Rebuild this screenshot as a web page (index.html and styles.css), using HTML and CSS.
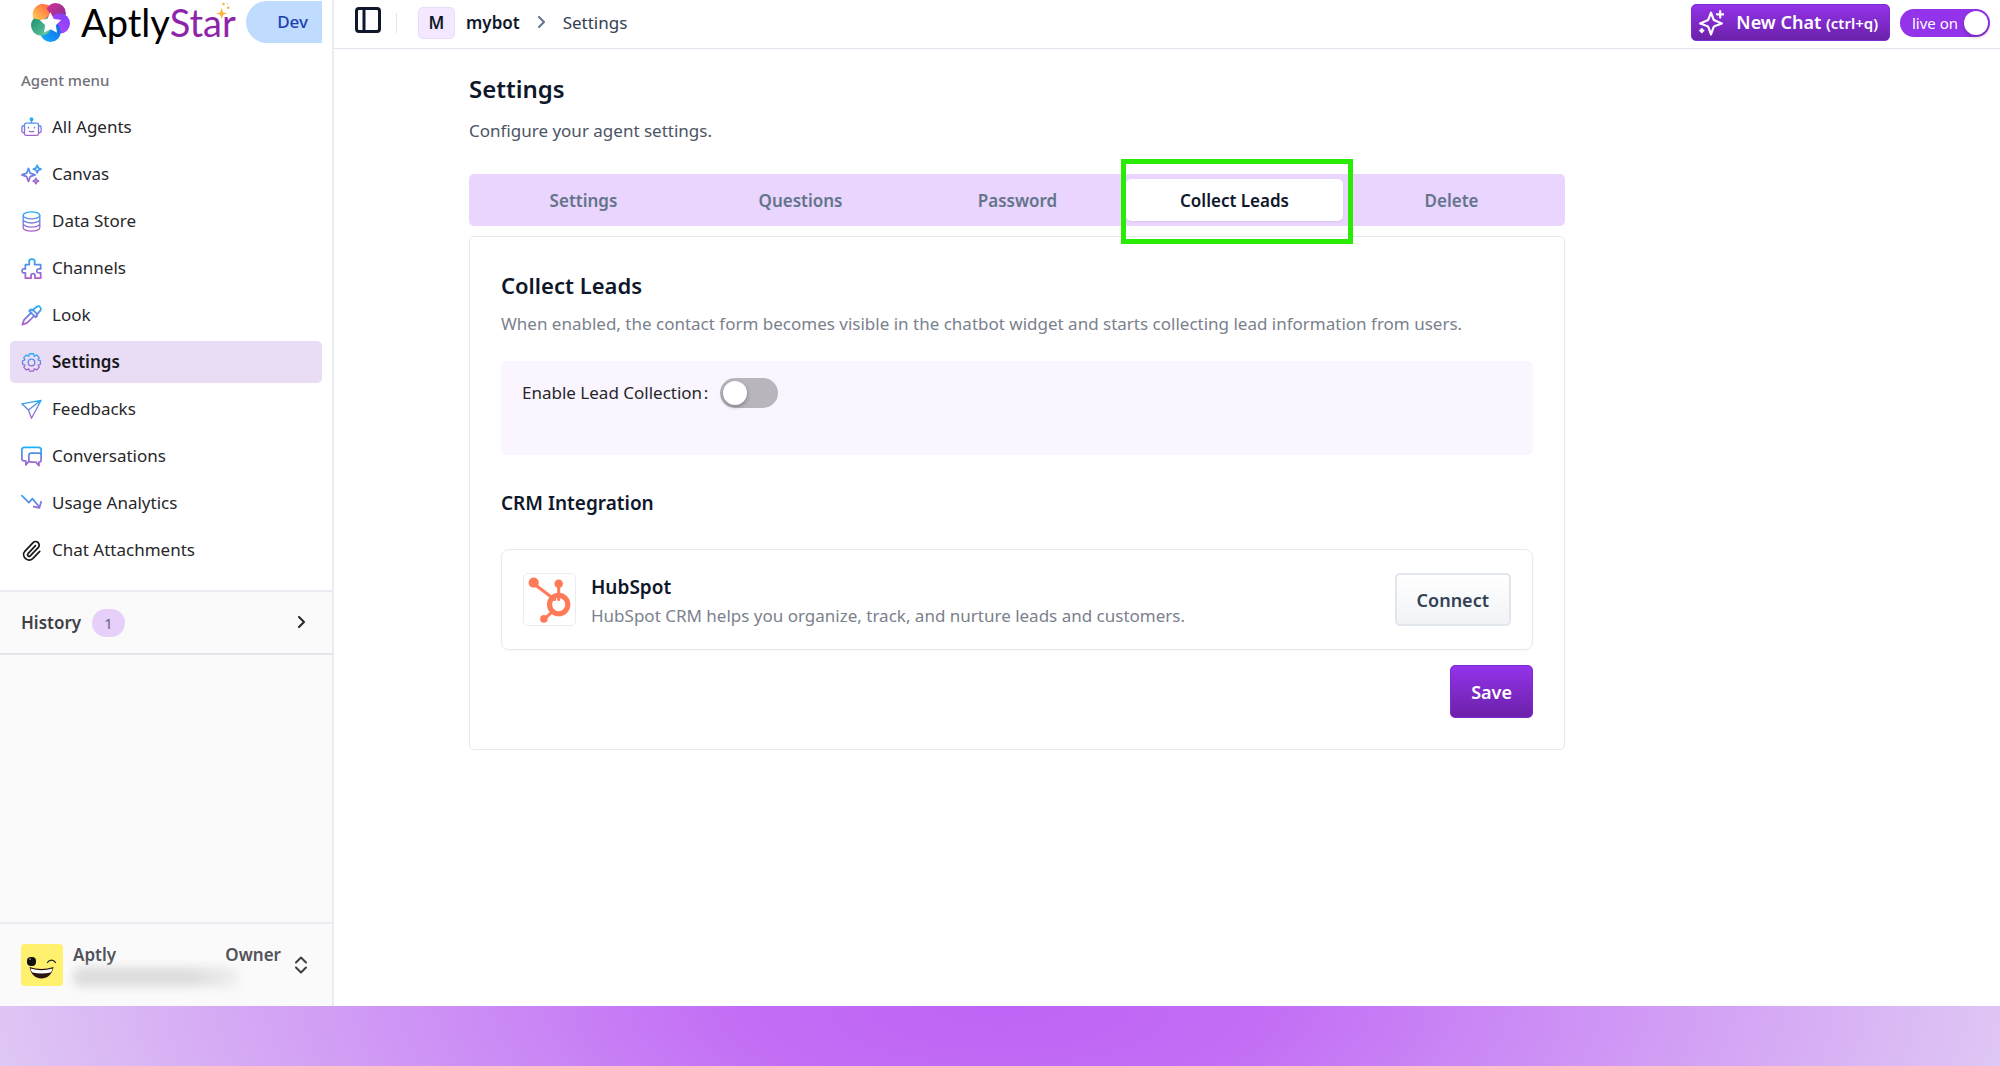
FILE: index.html
```html
<!DOCTYPE html>
<html lang="en">
<head>
<meta charset="utf-8">
<meta name="viewport" content="width=device-width, initial-scale=1">
<title>AptlyStar – Settings</title>
<link rel="stylesheet" href="styles.css">
</head>
<body>
<svg class="defs" aria-hidden="true">
  <defs>
    <linearGradient id="cool" gradientUnits="userSpaceOnUse" x1="0" y1="1" x2="0" y2="23">
      <stop offset="0" stop-color="#1fb0fa"/><stop offset=".5" stop-color="#6f7fe0"/><stop offset="1" stop-color="#b55cc8"/>
    </linearGradient>
    <linearGradient id="p1" x1="0" y1="1" x2="1" y2="0"><stop offset="0" stop-color="#ffd35a"/><stop offset="1" stop-color="#ff5a3c"/></linearGradient>
    <linearGradient id="p2" x1="0" y1="0" x2="1" y2="1"><stop offset="0" stop-color="#d8368c"/><stop offset="1" stop-color="#7a2a9c"/></linearGradient>
    <linearGradient id="p3" x1="1" y1="0" x2="0" y2="1"><stop offset="0" stop-color="#7a3cff"/><stop offset="1" stop-color="#c04cf0"/></linearGradient>
    <linearGradient id="p4" x1="0" y1="1" x2="1" y2="0"><stop offset="0" stop-color="#12b0ff"/><stop offset="1" stop-color="#1560e0"/></linearGradient>
    <linearGradient id="p5" x1="0" y1="0" x2="1" y2="1"><stop offset="0" stop-color="#148a6c"/><stop offset="1" stop-color="#6fd0a8"/></linearGradient>
  </defs>
</svg>
<div class="app">
  <aside class="sidebar">
    <div class="brand">
      <a class="logo" href="#">
        <svg class="logo-mark" viewBox="0 0 40 40" aria-hidden="true">
          <circle cx="13" cy="12" r="10" fill="url(#p1)"/>
          <circle cx="25" cy="11" r="10" fill="url(#p2)"/>
          <circle cx="29" cy="21" r="10" fill="url(#p3)"/>
          <circle cx="20" cy="29" r="10" fill="url(#p4)"/>
          <circle cx="11" cy="23" r="10" fill="url(#p5)"/>
          <path d="M3.500 16A10 10 0 0 1 13 2l7 10-7 6z" fill="url(#p1)"/>
          <path d="M20 10l3.200 6.600 7.200 1-5.200 5.100 1.200 7.200-6.400-3.400-6.400 3.400 1.200-7.200-5.200-5.100 7.200-1z" fill="#fff"/>
        </svg>
        <span class="logo-text">Aptly<span class="logo-accent">Star</span></span>
        <svg class="logo-spark" viewBox="0 0 18 18" aria-hidden="true"><path d="M7 6l1.500 5L13 12l-4.500 1.500L7 18l-1.500-4.500L1 12l4.500-1z"/><circle cx="9" cy="2" r="1.300"/><circle cx="14" cy="6" r="1.300"/><circle cx="13" cy="2" r=".6"/></svg>
      </a>
      <span class="env">Dev</span>
    </div>
    <nav class="nav" aria-label="Agent menu">
      <p class="nav-title">Agent menu</p>
      <ul class="nav-list">
        <li><a class="nav-item" href="#"><svg class="icon" viewBox="0 0 24 24"><circle cx="12" cy="2.500" r="1.500" fill="url(#cool)"/><path d="M12 4v3M6 7h12a2 2 0 0 1 2 2v10a2 2 0 0 1-2 2H6a2 2 0 0 1-2-2V9a2 2 0 0 1 2-2zM4 10H3a2 2 0 0 0-2 2v4a2 2 0 0 0 2 2h1M20 10h1a2 2 0 0 1 2 2v4a2 2 0 0 1-2 2h-1M8.500 11.500v1M15.500 11.500v1M9.500 16.500q2.500 1 5 0"/></svg>All Agents</a></li>
        <li><a class="nav-item" href="#"><svg class="icon icon-bold" viewBox="0 0 24 24"><path d="M8.500 5l2 5.500L16 12.500l-5.500 2L8.500 20l-2-5.500L1 12.500l5.500-2zM18.500 1.500l1.300 3 3 1.300-3 1.300-1.300 3-1.300-3-3-1.300 3-1.300zM17 16.500l1 2 2 1-2 1-1 2-1-2-2-1 2-1z"/></svg>Canvas</a></li>
        <li><a class="nav-item" href="#"><svg class="icon" viewBox="0 0 24 24"><ellipse cx="12" cy="5" rx="9.500" ry="4"/><path d="M2.500 5v14c0 2.200 4.200 4 9.500 4s9.500-1.800 9.500-4V5M2.500 9.700c0 2.200 4.200 4 9.500 4s9.500-1.800 9.500-4M2.500 14.400c0 2.200 4.200 4 9.500 4s9.500-1.800 9.500-4"/></svg>Data Store</a></li>
        <li><a class="nav-item" href="#"><svg class="icon icon-bold" viewBox="0 0 24 24"><path d="M5 7.500h4.500V5.500C8.500 3 10 1.200 12.500 1.200S16.500 3 15.500 5.500v2H22.500v5h-1.500c-4-.5-4 5 0 4.500h1.500v6h-6.500V20.500c.5-3.500-5-3.500-4.500 0V23H5v-6H3.500C.5 18 .5 11.500 3.500 12.500H5z"/></svg>Channels</a></li>
        <li><a class="nav-item" href="#"><svg class="icon icon-bold" viewBox="0 0 24 24"><path d="M13 6l5-4c3-2 6 2 4 4.500L18 11l.5 1.500-2 1.500-7-7L11 5zM12 8.500L3.500 17 1.500 22.500 7 20.500l8.500-8.500M14.500 6.500l3.500 3.500"/></svg>Look</a></li>
        <li><a class="nav-item active" href="#" aria-current="page"><svg class="icon" viewBox="0 0 24 24"><circle cx="12" cy="12" r="3.800"/><path d="M9.700 2h4.600l.9 2.900 2.700-1.400 2.900 2.900-1.300 2.700 2.700.9v4l-2.700.9 1.300 2.700-2.900 2.900-2.700-1.300-.9 2.700h-4.600l-.9-2.700-2.700 1.300-2.900-2.900 1.300-2.700-2.700-.9v-4l2.700-.9-1.300-2.700 2.900-2.900 2.700 1.400z"/></svg>Settings</a></li>
        <li><a class="nav-item" href="#"><svg class="icon" viewBox="0 0 24 24"><path d="M1 5.500L23 1.500 12 22 8.500 12.500zM8.500 12.500L23 1.500"/></svg>Feedbacks</a></li>
        <li><a class="nav-item" href="#"><svg class="icon icon-bold" viewBox="0 0 24 24"><path d="M9 17.500l-3.500 4V17H3.500C2 17 1 16 1 14.500v-10C1 2.500 2.500 1.500 4 1.500h16c2 0 3 1 3 3v6M11.500 8h9c1.500 0 2.500 1 2.500 2.500V16c0 1.500-1 2.500-2.500 2.500V22.500L17 18.500h-5.500C10 18.500 9 17.500 9 16v-5.500C9 9 10 8 11.500 8z"/></svg>Conversations</a></li>
        <li><a class="nav-item" href="#"><svg class="icon icon-bold" viewBox="0 0 24 24"><path d="M1 3l8 8 4-4.500 8 9.500M23 10l-2 7-6.500-1.500"/></svg>Usage Analytics</a></li>
        <li><a class="nav-item" href="#"><svg class="icon icon-dark" viewBox="0 0 24 24"><path d="M16.500 6.500L8 15.500a1.800 1.800 0 0 0 2.600 2.600l9-9.300a4 4 0 0 0-5.800-5.700l-9.200 9.500a6.200 6.200 0 0 0 8.800 8.700l8-8.300"/></svg>Chat Attachments</a></li>
      </ul>
    </nav>
    <button class="history" type="button">
      <span>History</span><span class="count">1</span>
      <svg class="chev" viewBox="0 0 14 14"><path d="M5 1l5 5-5 5"/></svg>
    </button>
    <div class="spacer"></div>
    <button class="account" type="button">
      <svg class="avatar" viewBox="0 0 42 42" aria-hidden="true">
        <rect width="42" height="42" rx="4" fill="#fff06e"/>
        <rect x="6" y="13" width="9" height="9" rx="4" fill="#111"/><circle cx="9" cy="15" r="1" fill="#777"/>
        <path d="M26.500 18.500c2-3.300 6-3.300 8 0" fill="none" stroke="#222" stroke-width="1.300"/>
        <path d="M8.500 23q12 4 24 0C31 31 26 34.500 20.500 34.500S10 31 8.500 23z" fill="#2b1510"/>
        <path d="M9.500 24.500q11 3.500 22 0-.5 3.500-2 4-9 2-18 0-1.500-1-2-4z" fill="#fff"/>
      </svg>
      <span class="who"><span class="who-row"><span>Aptly</span><span>Owner</span></span><span class="smudge"></span></span>
      <svg class="updown" viewBox="0 0 12 18"><path d="M1 6.500l5-5 5 5M1 11.500l5 5 5-5"/></svg>
    </button>
  </aside>
  <div class="content">
    <header class="topbar">
      <button class="panel-btn" type="button" aria-label="Toggle sidebar"><svg viewBox="0 0 26 26"><rect x="1.500" y="1.500" width="23" height="23" rx="2.500"/><path d="M9 1.500v23"/></svg></button>
      <span class="divider"></span>
      <nav class="crumbs" aria-label="Breadcrumb">
        <span class="bot-badge">M</span>
        <a class="bot-name" href="#">mybot</a>
        <svg class="chev chev-light" viewBox="0 0 14 14"><path d="M5 1l5 5-5 5"/></svg>
        <a class="crumb" href="#">Settings</a>
      </nav>
      <button class="primary new-chat" type="button">
        <svg viewBox="0 0 24 24"><path d="M12 2.500l2.200 5.800c.3.800.7 1.200 1.500 1.500l6.300 2.700-6.300 2.200c-.8.300-1.200.7-1.500 1.500L12 22.500l-2.200-6.300c-.3-.8-.7-1.200-1.500-1.500L2 12.500l6.300-2.700c.8-.3 1.200-.7 1.500-1.500zM20.500 1v6M17.500 4h6M3.500 17.500v3M2 19h3"/></svg>
        <span>New Chat <small>(ctrl+q)</small></span>
      </button>
      <label class="live"><input type="checkbox" role="switch" checked><span>live on</span></label>
    </header>
    <main class="main">
      <div class="page">
        <h1>Settings</h1>
        <p class="lead">Configure your agent settings.</p>
        <div class="tabs" role="tablist">
          <button class="tab" type="button" role="tab">Settings</button>
          <button class="tab" type="button" role="tab">Questions</button>
          <button class="tab" type="button" role="tab">Password</button>
          <button class="tab selected" type="button" role="tab" aria-selected="true">Collect Leads</button>
          <button class="tab" type="button" role="tab">Delete</button>
        </div>
        <section class="card">
          <h2>Collect Leads</h2>
          <p class="muted">When enabled, the contact form becomes visible in the chatbot widget and starts collecting lead information from users.</p>
          <div class="enable">
            <label for="lead">Enable Lead Collection&hairsp;:</label>
            <input id="lead" class="switch" type="checkbox" role="switch">
          </div>
          <h3>CRM Integration</h3>
          <div class="integration">
            <span class="hub"><svg viewBox="0 0 50 50" aria-hidden="true"><path d="M9 9l21 16M34 11v14M29 36l-9 8" stroke-width="3"/><circle cx="34" cy="30" r="9" stroke-width="5"/><g class="dots"><circle cx="9.500" cy="8.500" r="5"/><circle cx="34" cy="9.500" r="4.200"/><circle cx="19.500" cy="44" r="3.700"/></g></svg></span>
            <div class="about"><h4>HubSpot</h4><p class="muted">HubSpot CRM helps you organize, track, and nurture leads and customers.</p></div>
            <button class="secondary" type="button">Connect</button>
          </div>
          <button class="primary save" type="submit">Save</button>
        </section>
      </div>
    </main>
  </div>
</div>
<footer class="band"></footer>
</body>
</html>
```

FILE: styles.css
```css
* { box-sizing: border-box; }
body {
  margin: 0;
  min-height: 100vh;
  display: flex;
  flex-direction: column;
  background: #fff;
  color: #27272a;
  font: 17px/24px "Noto Sans", "Open Sans", sans-serif;
}
h1, h2, h3, h4, p, ul { margin: 0; padding: 0; }
h1, h2, h3, h4 { color: #0f172a; font-weight: 600; }
ul { list-style: none; }
a { color: inherit; text-decoration: none; }
button { margin: 0; padding: 0; border: 0; background: none; color: inherit; font: inherit; cursor: pointer; }
svg { display: block; flex: none; fill: none; stroke-linecap: round; stroke-linejoin: round; }
.defs { position: absolute; width: 0; height: 0; }

.app { flex: 1; display: flex; }
.band {
  height: 60px;
  background: radial-gradient(52% 600% at 50% 0, #bf64f6, #c26df5 25%, #d09af5 62%, #e0caf4);
}

/* Sidebar */
.sidebar {
  width: 334px;
  flex: none;
  display: flex;
  flex-direction: column;
  border-right: 2px solid #ebebf3;
  background: #fafafa;
}
.brand { display: flex; align-items: center; justify-content: space-between; height: 48px; padding: 0 10px 4px 30px; background: #fff; }
.logo { position: relative; display: flex; align-items: center; gap: 10px; }
.logo-mark { width: 41px; height: 41px; }
.logo-text { color: #000; font: 38px/40px Lato, "Noto Sans", sans-serif; }
.logo-accent { color: #8e24aa; }
.logo-spark { position: absolute; right: 4px; top: 0; width: 17px; height: 17px; fill: #fbb030; }
.env { width: 76px; padding: 9px 14px 9px 0; border-radius: 21px 0 0 21px; background: #bfdbfe; color: #1e40af; text-align: right; font-weight: 500; }
.nav { padding: 20px 10px 19px; background: #fff; }
.nav-title { padding: 0 11px 14px; color: #71717a; font-size: 15px; font-weight: 500; }
.nav-list { display: grid; gap: 5px; }
.nav-item { display: flex; align-items: center; gap: 10px; height: 42px; padding: 0 11px; border-radius: 5px; }
.nav-item.active { background: #e9ddf6; color: #18181b; font-weight: 600; }
.icon { width: 21px; height: 21px; stroke: url(#cool); stroke-width: 1.500; }
.icon-bold { stroke-width: 2; }
.icon-dark { stroke: #18181b; stroke-width: 2; }
.history { display: flex; align-items: center; gap: 11px; height: 65px; padding: 0 24px 0 21px; border-top: 2px solid #ebebf3; border-bottom: 2px solid #e4e4ea; color: #3f3f46; font-weight: 600; }
.count { padding: 2px 12px; border-radius: 14px; background: #e6cff9; color: #6b5f86; font-size: 15px; font-weight: 400; }
.chev { width: 14px; height: 14px; margin-left: auto; stroke: #27272a; stroke-width: 2; }
.spacer { flex: 1; }
.account { display: flex; align-items: center; gap: 10px; height: 84px; padding: 0 25px 0 21px; border-top: 2px solid #ebebf3; color: #52525b; font-weight: 600; text-align: left; }
.avatar { width: 42px; height: 42px; }
.who { flex: 1; display: grid; }
.who-row { display: flex; justify-content: space-between; padding-right: 4px; }
.smudge { width: 166px; height: 20px; border-radius: 8px; background: linear-gradient(90deg, #dedede 70%, #f0f0f0); filter: blur(4px); }
.updown { width: 12px; height: 18px; stroke: #3f3f46; stroke-width: 2; }

/* Top bar */
.content { flex: 1; min-width: 0; }
.topbar { display: flex; align-items: center; height: 49px; padding: 0 10px 3px 21px; border-bottom: 1px solid #dfe6f0; }
.panel-btn { width: 26px; padding-bottom: 6px; }
.panel-btn svg { stroke: #0f172a; stroke-width: 3; }
.divider { width: 1px; height: 20px; margin: 0 21px 0 15px; background: #dfe6f0; }
.crumbs { flex: 1; display: flex; align-items: center; gap: 11px; }
.bot-badge { width: 37px; padding: 3px 0; border: 1px solid #eaddfb; border-radius: 5px; background: #f3e8ff; color: #0f172a; text-align: center; font-weight: 600; }
.bot-name { color: #0f172a; font-weight: 600; }
.crumb { color: #334155; }
.chev-light { margin: 0 4px 0 3px; stroke: #64748b; }
.primary { border: 1px solid #7e2bd0; border-radius: 5px; background: linear-gradient(#9333ea, #6b21a8); color: #fff; font-size: 18px; font-weight: 600; }
.new-chat { display: flex; align-items: center; gap: 12px; height: 37px; padding: 0 11px 0 6px; }
.new-chat svg { width: 26px; height: 26px; stroke: #fff; stroke-width: 2; }
.new-chat small { font-size: 15px; }
.live { display: flex; align-items: center; position: relative; width: 90px; height: 28px; margin-left: 10px; padding-left: 12px; border-radius: 14px; background: #9333ea; color: #fff; font-size: 15px; }
.live input { position: absolute; inset: 0; margin: 0; appearance: none; }
.live input::after { content: ""; position: absolute; right: 2px; top: 2px; width: 24px; height: 24px; border-radius: 50%; background: #fff; box-shadow: 0 2px 4px rgb(0 0 0 / .25); }

/* Settings page */
.main { padding: 24px 300px 24px 0; }
.page { max-width: 1096px; margin: 0 auto; }
h1 { font-size: 24px; line-height: 32px; }
.lead { padding: 14px 0 31px; color: #4b5563; }
.tabs { display: grid; grid-template-columns: repeat(5, 1fr); padding: 5px 5px 5px 6px; border-radius: 5px; background: #e9d5fd; }
.tab { height: 42px; padding-top: 2px; border-radius: 5px; color: #64748b; font-weight: 600; }
.tab.selected { position: relative; background: #fff; color: #0f172a; box-shadow: 0 1px 2px rgb(0 0 0 / .08); }
.tab.selected::after { content: ""; position: absolute; inset: -20px -10px -23px -5px; border: 5px solid #2aeb05; }
.card { display: flex; flex-direction: column; margin-top: 10px; padding: 32px 31px 31px; border: 1px solid #e5eaf2; border-radius: 5px; }
h2 { font-size: 22px; line-height: 32px; }
.muted { color: #7b818d; }
.card > .muted { padding: 11px 0 25px; }
.enable { display: flex; gap: 12px; height: 94px; padding: 17px 21px; border-radius: 5px; background: #faf5ff; }
.enable label { line-height: 30px; }
.switch { appearance: none; width: 58px; height: 30px; margin: 0; padding: 3px; border-radius: 15px; background: #b8b5bd; }
.switch::before { content: ""; display: block; width: 24px; height: 24px; border-radius: 50%; background: #fff; box-shadow: 0 2px 4px rgb(0 0 0 / .3); }
h3 { padding: 36px 0 34px; font-size: 19px; }
.integration { display: flex; align-items: center; gap: 15px; height: 101px; padding: 0 21px; border: 1px solid #e5eaf2; border-radius: 8px; box-shadow: 0 1px 2px rgb(0 0 0 / .04); }
.hub { width: 53px; height: 53px; border: 1px solid #e8edf4; border-radius: 5px; }
.hub svg { stroke: #ff7a59; }
.hub .dots { fill: #ff7a59; stroke: none; }
.about { flex: 1; display: grid; gap: 5px; padding-top: 3px; }
h4 { font-size: 19px; }
.secondary { height: 53px; padding: 0 20px; border: 2px solid #e1e6ed; border-radius: 5px; background: linear-gradient(#fff, #f1f3f6); color: #334155; font-size: 18px; font-weight: 600; }
.save { align-self: flex-end; height: 53px; margin-top: 15px; padding: 0 20px; }
```
